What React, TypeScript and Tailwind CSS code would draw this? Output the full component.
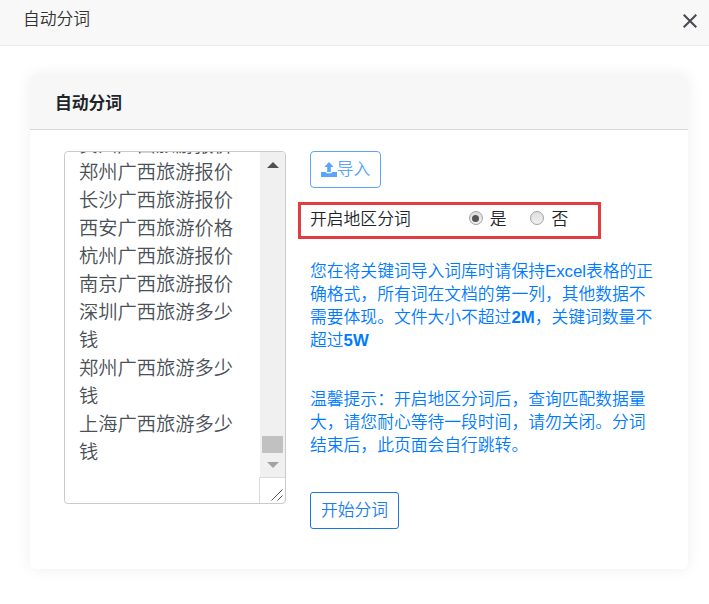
import { useState } from 'react'

const keywords = [
  '贵州广西旅游报价',
  '郑州广西旅游报价',
  '长沙广西旅游报价',
  '西安广西旅游价格',
  '杭州广西旅游报价',
  '南京广西旅游报价',
  '深圳广西旅游多少钱',
  '郑州广西旅游多少钱',
  '上海广西旅游多少钱',
]

function Radio({ checked, onClick }: { checked: boolean; onClick: () => void }) {
  return (
    <button
      type="button"
      role="radio"
      aria-checked={checked}
      onClick={onClick}
      className="-mt-[4px] flex h-[14px] w-[14px] items-center justify-center rounded-full border border-[#a3a3a3] bg-gradient-to-b from-[#dedede] to-[#f0f0f0]"
    >
      {checked && <span className="h-[7px] w-[7px] rounded-full bg-[#555]" />}
    </button>
  )
}

function KeywordBox() {
  return (
    <div className="flex h-[353px] w-[222px] shrink-0 overflow-hidden rounded-[4px] border border-[#c8cacc] bg-white">
      <div className="flex flex-1 flex-col justify-start overflow-hidden pl-[14px]">
        {/* scrolled to the end, the first line shows only its lower edge */}
        <div className="-mt-[21px] w-[168px] text-[19.25px] leading-[28px] text-[#495057]">
          {keywords.map((word, i) => (
            <p key={i} className="first:pt-[2px] first:leading-[26px]">
              {word}
            </p>
          ))}
        </div>
      </div>
      <div className="flex w-[26px] flex-col">
        <div className="ml-px flex flex-1 flex-col items-center bg-[#f0f0f0]">
          <svg width="12" height="6" viewBox="0 0 12 6" className="mt-[10px] mb-auto">
            <path d="M0 6L6 0l6 6z" fill="#505050" />
          </svg>
          <div className="h-[17px] w-[21px] bg-[#c1c1c1]" />
          <svg width="12" height="6" viewBox="0 0 12 6" className="mt-[9px] mb-[9px]">
            <path d="M0 0l6 6 6-6z" fill="#a3a3a3" />
          </svg>
        </div>
        <div className="flex h-[26px] items-end justify-end border-t border-l border-[#d9d9d9] pr-[2px] pb-[2px]">
          <svg width="12" height="12" viewBox="0 0 12 12" fill="none" stroke="#555" strokeWidth="1">
            <path d="M0.5 11.5l11-11M6.5 11.5l5-5" />
          </svg>
        </div>
      </div>
    </div>
  )
}

export default function App() {
  const [region, setRegion] = useState(true)

  return (
    <div className="h-[604px] w-[709px] overflow-hidden bg-white font-['Liberation_Sans','Noto_Sans_CJK_SC',sans-serif] text-[16.8px] font-[350] text-[#212529]">
      <header className="flex h-[46px] items-center justify-between border-b border-[#e9e9e9] bg-[#f8f8f8] pr-[12px] pl-[23px]">
        <h1 className="-mt-[5px] leading-[24px] text-[#333]">自动分词</h1>
        <button type="button" aria-label="关闭" className="-mt-[4px]">
          <svg width="14" height="14" viewBox="0 0 14 14" stroke="#4a4a52" strokeWidth="2.1">
            <path d="M0.7 0.7l12.6 12.6M13.3 0.7L0.7 13.3" />
          </svg>
        </button>
      </header>

      <section className="mt-[29px] ml-[30px] h-[494px] w-[658px] rounded-[6px] bg-white shadow-[0_0_16px_rgba(0,0,0,0.07)]">
        <div className="flex h-[55px] items-center rounded-t-[6px] border-b border-[#d9d9d9] bg-[#f7f7f7] pt-[3px] pl-[25px]">
          <h2 className="font-bold">自动分词</h2>
        </div>

        <div className="flex pt-[21px] pl-[34px]">
          <KeywordBox />

          <div className="ml-[12px] flex flex-col">
            <button
              type="button"
              className="ml-[12px] flex h-[37px] w-[71px] items-center justify-center rounded-[4px] border border-[#59a5fb] text-[#59a5fb]"
            >
              <svg width="16" height="15" viewBox="0 0 16 15" fill="currentColor" className="-mt-[1px]">
                <path d="M8 0l4.6 5H9.8v5H6.2V5H3.4z" />
                <path d="M0 10h5.2v1.2h5.6V10H16v5H0z" />
              </svg>
              导入
            </button>

            <div className="mt-[14px] flex h-[37px] w-[303px] items-center border-3 border-[#e23c40] pb-px pl-[9px]">
              <span>开启地区分词</span>
              <div className="ml-[58px] flex items-center" role="radiogroup">
                <Radio checked={region} onClick={() => setRegion(true)} />
                <span className="mr-[23px] ml-[7px]">是</span>
                <Radio checked={!region} onClick={() => setRegion(false)} />
                <span className="ml-[8px]">否</span>
              </div>
            </div>

            <div className="ml-[12px] leading-[23px] whitespace-nowrap text-[#007bff]">
              <p className="mt-[21px]">
                您在将关键词导入词库时请保持Excel表格的正
                <br />
                确格式，所有词在文档的第一列，其他数据不
                <br />
                需要体现。文件大小不超过<b className="font-bold">2M</b>，关键词数量不
                <br />
                超过<b className="font-bold">5W</b>
              </p>
              <p className="mt-[36px]">
                温馨提示：开启地区分词后，查询匹配数据量
                <br />
                大，请您耐心等待一段时间，请勿关闭。分词
                <br />
                结束后，此页面会自行跳转。
              </p>
            </div>

            <button
              type="button"
              className="mt-[35px] ml-[12px] flex h-[37px] w-[89px] items-center justify-center rounded-[3px] border border-[#1a76e0] text-[#1a7df0]"
            >
              开始分词
            </button>
          </div>
        </div>
      </section>
    </div>
  )
}
